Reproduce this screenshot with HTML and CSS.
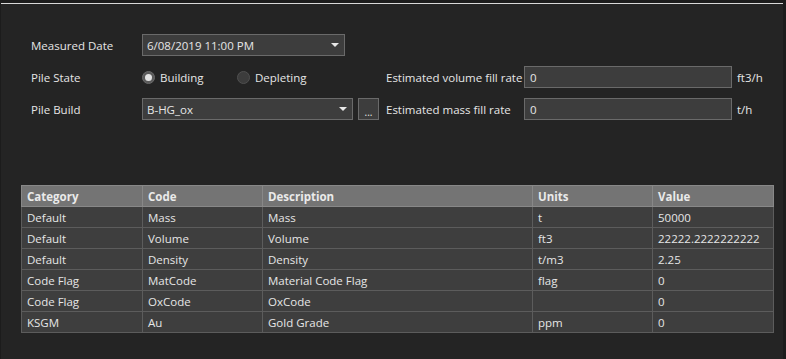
FILE: index.html
```html
<!DOCTYPE html>
<html>
<head>
<meta charset="utf-8">
<link rel="stylesheet" href="styles.css">
</head>
<body>
<div class="window">
  <div class="form">
    <div class="row">
      <div class="label">Measured Date</div>
      <div class="combo combo-date"><span>6/08/2019 11:00 PM</span><i class="arrow"></i></div>
    </div>
    <div class="row">
      <div class="label">Pile State</div>
      <div class="radios">
        <label class="radio"><span class="dot checked"></span>Building</label>
        <label class="radio"><span class="dot"></span>Depleting</label>
      </div>
      <div class="label2">Estimated volume fill rate</div>
      <div class="input">0</div>
      <div class="unit">ft3/h</div>
    </div>
    <div class="row">
      <div class="label">Pile Build</div>
      <div class="combo combo-build"><span>B-HG_ox</span><i class="arrow"></i></div>
      <div class="btn">...</div>
      <div class="label2 gap">Estimated mass fill rate</div>
      <div class="input">0</div>
      <div class="unit">t/h</div>
    </div>
  </div>
  <table class="grid">
    <colgroup>
      <col class="c1"><col class="c2"><col class="c3"><col class="c4"><col class="c5">
    </colgroup>
    <thead>
      <tr><th>Category</th><th>Code</th><th>Description</th><th>Units</th><th>Value</th></tr>
    </thead>
    <tbody>
      <tr><td>Default</td><td>Mass</td><td>Mass</td><td>t</td><td>50000</td></tr>
      <tr><td>Default</td><td>Volume</td><td>Volume</td><td>ft3</td><td>22222.2222222222</td></tr>
      <tr><td>Default</td><td>Density</td><td>Density</td><td>t/m3</td><td>2.25</td></tr>
      <tr><td>Code Flag</td><td>MatCode</td><td>Material Code Flag</td><td>flag</td><td>0</td></tr>
      <tr><td>Code Flag</td><td>OxCode</td><td>OxCode</td><td></td><td>0</td></tr>
      <tr><td>KSGM</td><td>Au</td><td>Gold Grade</td><td>ppm</td><td>0</td></tr>
    </tbody>
  </table>
</div>
</body>
</html>
```

FILE: styles.css
```css
html, body {
  margin: 0;
  padding: 0;
  background: #1c1c1c;
  width: 786px;
  height: 359px;
  overflow: hidden;
}
body {
  font-family: "Open Sans", "Noto Sans", sans-serif;
  font-size: 11.5px;
  color: #e6e6e6;
  padding-top: 3px;
  box-sizing: border-box;
}
.window {
  margin-left: 1px;
  width: 782px;
  height: 356px;
  background: #242424;
  border-top: 1px solid #d8d8d8;
  box-sizing: border-box;
  padding-top: 30px;
}
.form {
  padding-left: 30px;
  display: flex;
  flex-direction: column;
  gap: 10px;
}
.row {
  display: flex;
  align-items: center;
  height: 22px;
}
.label {
  width: 111px;
}
.combo {
  height: 22px;
  box-sizing: border-box;
  border: 1px solid #6a6a6a;
  background: #3d3d3d;
  display: flex;
  align-items: center;
  padding-left: 4px;
  justify-content: space-between;
}
.combo-date { width: 203px; }
.combo-build { width: 211px; }
.arrow {
  width: 0;
  height: 0;
  border-left: 4px solid transparent;
  border-right: 4px solid transparent;
  border-top: 4px solid #e8e8e8;
  margin-right: 5px;
}
.radios {
  width: 244px;
  display: flex;
  gap: 0;
}
.radio {
  display: flex;
  align-items: center;
  width: 95px;
}
.dot {
  width: 13px;
  height: 13px;
  border-radius: 50%;
  background: #3c3c3c;
  border: 1px solid #505050;
  box-sizing: border-box;
  margin-right: 5px;
  display: flex;
  align-items: center;
  justify-content: center;
}
.dot.checked {
  background: #5a5a5a;
  border-color: #6a6a6a;
}
.dot.checked::after {
  content: "";
  width: 7px;
  height: 7px;
  border-radius: 50%;
  background: #e4e4e4;
}
.label2 {
  width: 138px;
}
.label2.gap {
  margin-left: 7px;
}
.input {
  width: 208px;
  height: 22px;
  box-sizing: border-box;
  border: 1px solid #6a6a6a;
  background: #3d3d3d;
  padding-left: 5px;
  display: flex;
  align-items: center;
}
.unit {
  margin-left: 5px;
}
.btn {
  margin-left: 5px;
  width: 21px;
  height: 22px;
  box-sizing: border-box;
  border: 1px solid #6a6a6a;
  background: #3d3d3d;
  display: flex;
  align-items: flex-end;
  justify-content: center;
  line-height: 14px;
  font-size: 10px;
}
.grid {
  margin-top: 65px;
  margin-left: 20px;
  border-collapse: collapse;
  table-layout: fixed;
  width: 752px;
  border: 1px solid #707070;
}
.c1 { width: 121px; }
.c2 { width: 120px; }
.c3 { width: 270px; }
.c4 { width: 120px; }
.c5 { width: 121px; }
.grid th, .grid td {
  height: 20px;
  padding: 0 0 0 5px;
  text-align: left;
  border: 1px solid #5c5c5c;
  white-space: nowrap;
  overflow: hidden;
}
.grid th {
  background: #747474;
  font-weight: bold;
  border-color: #888;
  color: #eaeaea;
}
.grid td {
  background: #3e3e3e;
}
```
